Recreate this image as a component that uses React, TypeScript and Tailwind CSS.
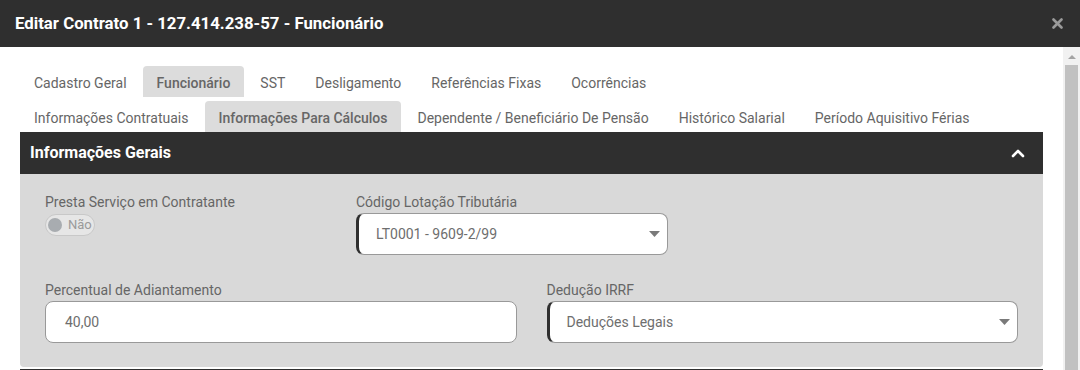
import React from 'react';

const tabsTop = ['Cadastro Geral', 'Funcionário', 'SST', 'Desligamento', 'Referências Fixas', 'Ocorrências'];
const tabsBottom = [
    'Informações Contratuais',
    'Informações Para Cálculos',
    'Dependente / Beneficiário De Pensão',
    'Histórico Salarial',
    'Período Aquisitivo Férias',
];

const Tab: React.FC<{ label: string; active?: boolean }> = ({ label, active }) => (
    <div
        className={`h-[31px] px-[14px] pt-[3px] flex items-center text-[14px] rounded-t-[4px] ${active ? 'bg-[#dcdcdc] text-[#666] font-medium' : 'text-[#666]'}`}
    >
        {label}
    </div>
);

const Caret = () => (
    <svg width="11" height="6" viewBox="0 0 11 6" className="shrink-0">
        <path d="M0 0 H11 L5.5 6 Z" fill="#7a7a7a" />
    </svg>
);

const SelectBox: React.FC<{ value: string; className?: string }> = ({ value, className }) => (
    <div
        className={`h-[42px] bg-white border border-[#999] border-l-[3px] border-l-[#2f2f2f] rounded-[8px] flex items-center justify-between pl-[17px] pr-[7px] ${className ?? ''}`}
    >
        <span className="text-[14px] text-[#6e6e6e]">{value}</span>
        <Caret />
    </div>
);

const Label: React.FC<{ children: React.ReactNode }> = ({ children }) => (
    <div className="text-[14px] leading-[20px] text-[#666]">{children}</div>
);

export default function App() {
    return (
        <div
            className="w-[1080px] h-[370px] overflow-hidden bg-white flex flex-col"
            style={{ fontFamily: 'Roboto, "Liberation Sans", sans-serif' }}
        >
            {/* Modal header */}
            <div className="h-[47px] shrink-0 bg-[#2f2f2f] flex items-center justify-between pl-[15px] pr-[17px]">
                <span className="text-white font-bold text-[16.8px]">Editar Contrato 1 - 127.414.238-57 - Funcionário</span>
                <svg width="11" height="11" viewBox="0 0 11 11">
                    <path d="M1.5 1.5 L9.5 9.5 M9.5 1.5 L1.5 9.5" stroke="#9a9a9a" strokeWidth="2.6" strokeLinecap="round" />
                </svg>
            </div>

            <div className="flex-1 flex min-h-0">
                {/* Content */}
                <div className="flex-1 px-[20px] pt-[19px] min-w-0">
                    <div className="flex gap-x-[2px]">
                        {tabsTop.map((t) => (
                            <Tab key={t} label={t} active={t === 'Funcionário'} />
                        ))}
                    </div>
                    <div className="flex gap-x-[2px] mt-[4px]">
                        {tabsBottom.map((t) => (
                            <Tab key={t} label={t} active={t === 'Informações Para Cálculos'} />
                        ))}
                    </div>

                    {/* Panel */}
                    <div className="h-[42px] bg-[#2f2f2f] flex items-center justify-between pl-[10px] pr-[18px]">
                        <span className="text-white font-bold text-[16px]">Informações Gerais</span>
                        <svg width="14" height="9" viewBox="0 0 14 9">
                            <path d="M2 7 L7 2 L12 7" stroke="#fff" strokeWidth="2.6" fill="none" strokeLinecap="round" strokeLinejoin="round" />
                        </svg>
                    </div>
                    <div className="bg-[#d9d9d9] rounded-b-[4px] px-[25px] pt-[18px] pb-[24px]">
                        <div className="flex">
                            <div className="w-[311px]">
                                <Label>Presta Serviço em Contratante</Label>
                                <div className="mt-[2px] w-[50px] h-[22px] rounded-full border border-[#c8c8c8] bg-[#e6e6e6] flex items-center pl-[2px] gap-[6px]">
                                    <div className="w-[14px] h-[14px] rounded-full bg-[#a8acb0]" />
                                    <span className="text-[13px] text-[#9a9a9a]">Não</span>
                                </div>
                            </div>
                            <div className="w-[312px]">
                                <Label>Código Lotação Tributária</Label>
                                <SelectBox value="LT0001 - 9609-2/99" className="mt-[1px]" />
                            </div>
                        </div>

                        <div className="grid grid-cols-2 gap-x-[30px] mt-[25px]">
                            <div>
                                <Label>Percentual de Adiantamento</Label>
                                <div className="mt-[1px] h-[42px] bg-white border border-[#999] rounded-[8px] flex items-center pl-[19px]">
                                    <span className="text-[14px] text-[#6e6e6e]">40,00</span>
                                </div>
                            </div>
                            <div>
                                <Label>Dedução IRRF</Label>
                                <SelectBox value="Deduções Legais" className="mt-[1px]" />
                            </div>
                        </div>
                    </div>
                    <div className="h-[10px] mt-[2px] bg-[#2f2f2f]" />
                </div>

                {/* Scrollbar */}
                <div className="w-[17px] shrink-0 bg-[#f1f1f1] flex flex-col items-center pt-[8px]">
                    <svg width="8" height="4" viewBox="0 0 8 4">
                        <path d="M0 4 L4 0 L8 4 Z" fill="#a3a3a3" />
                    </svg>
                    <div className="mt-[6px] w-[13px] flex-1 bg-[#c1c1c1]" />
                </div>
            </div>
        </div>
    );
}
